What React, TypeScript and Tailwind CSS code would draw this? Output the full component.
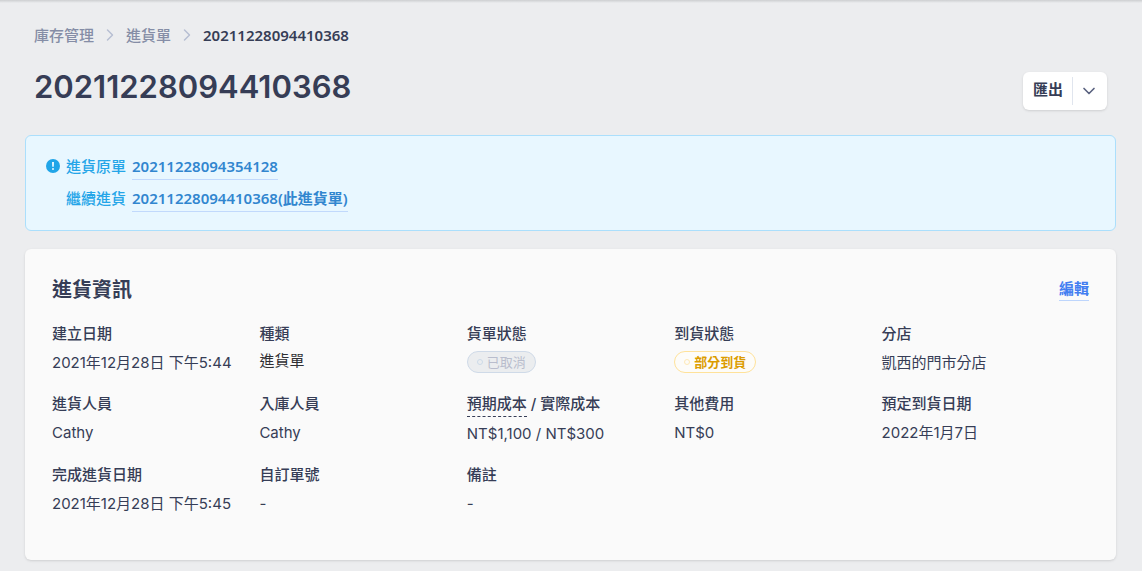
import React from 'react';
import { ChevronDown, ChevronRight } from 'lucide-react';

const fields = [
  { label: '建立日期', value: '2021年12月28日 下午5:44' },
  { label: '種類', value: <span className="block leading-5 text-[#2f2f33]">進貨單</span> },
  { label: '貨單狀態', value: <StatusTag tone="muted">已取消</StatusTag> },
  { label: '到貨狀態', value: <StatusTag tone="warning">部分到貨</StatusTag> },
  { label: '分店', value: '凱西的門市分店' },
  { label: '進貨人員', value: 'Cathy' },
  { label: '入庫人員', value: 'Cathy' },
  {
    label: (
      <>
        <span className="inline-block border-b border-dashed border-[#363d56]">預期成本</span> / 實際成本
      </>
    ),
    value: 'NT$1,100 / NT$300',
  },
  { label: '其他費用', value: 'NT$0' },
  { label: '預定到貨日期', value: '2022年1月7日' },
  { label: '完成進貨日期', value: '2021年12月28日 下午5:45' },
  { label: '自訂單號', value: '-' },
  { label: '備註', value: '-' },
];

function StatusTag({ tone, children }: { tone: 'muted' | 'warning'; children: React.ReactNode }) {
  return (
    <span
      className={`flex h-[22px] w-fit items-center gap-1 rounded-full border px-[9px] text-[13px] leading-5 ${
        tone === 'muted'
          ? 'border-[#cfdae8] bg-[#ebedef] text-[#b9bdcd]'
          : 'border-[#ffe29a] bg-[#fdfcf9] font-semibold text-[#dc9c00]'
      }`}
    >
      <span
        className={`h-[6px] w-[6px] rounded-full border ${
          tone === 'muted' ? 'border-[#cddbe9]' : 'border-[#ffe9b5]'
        }`}
      />
      {children}
    </span>
  );
}

function Breadcrumb() {
  return (
    <nav className="flex items-center gap-[6px] text-[15px] leading-6 font-medium text-[#858da6]">
      <a href="#inventory">庫存管理</a>
      <ChevronRight className="h-5 w-5 text-[#b7bfd2]" strokeWidth={1.75} />
      <a href="#orders">進貨單</a>
      <ChevronRight className="h-5 w-5 text-[#b7bfd2]" strokeWidth={1.75} />
      <span className="font-semibold text-[#363d56]">20211228094410368</span>
    </nav>
  );
}

function Notice() {
  return (
    <section className="mt-7 rounded-md border border-[#abdffc] bg-[#e8f7ff] px-5 pt-[18px] pb-[18px] text-[15px] text-[#24a5e8]">
      <div className="flex gap-[6px]">
        <svg viewBox="0 0 14 14" className="mt-[5px] h-[14px] w-[14px]">
          <circle cx="7" cy="7" r="7" fill="#20a5e8" />
          <path d="M6 3h2l-.2 4.8H6.2z" fill="#e8f7ff" />
          <circle cx="7" cy="9.9" r="1" fill="#e8f7ff" />
        </svg>
        <div className="space-y-[6px]">
          <p className="flex gap-[6px] leading-6 font-medium">
            進貨原單
            <a href="#origin" className="border-b border-[#c1d9fc] pb-px font-semibold text-[#3186cf]">
              20211228094354128
            </a>
          </p>
          <p className="flex gap-[6px] leading-6 font-medium">
            繼續進貨
            <a href="#current" className="border-b border-[#c1d9fc] pb-px font-semibold text-[#3186cf]">
              20211228094410368(此進貨單)
            </a>
          </p>
        </div>
      </div>
    </section>
  );
}

export default function App() {
  return (
    <div className="min-h-screen bg-[#ecedef] font-['Noto_Sans','Noto_Sans_CJK_TC',sans-serif] text-[#363d56]">
      <div className="h-[3px] bg-linear-to-b from-[#cdcfd1] to-[#ecedef]" />
      <main className="pt-5 pr-[26px] pb-3 pl-[25px]">
        <header className="flex items-end justify-between px-[9px]">
          <div>
            <Breadcrumb />
            <h1 className="mt-5 font-['Inter','Noto_Sans_CJK_TC',sans-serif] text-[31px] leading-10 font-semibold">
              20211228094410368
            </h1>
          </div>
          <div className="mb-[-3px] flex h-[38px] items-center rounded-md bg-white shadow-sm">
            <button className="h-full pr-[9px] pb-1 pl-[10px] text-[15px] font-semibold">匯出</button>
            <span className="h-7 w-px bg-[#e0e5ee]" />
            <button aria-label="更多匯出選項" className="flex h-full items-center pr-2 pl-[6px]">
              <ChevronDown className="h-5 w-5 text-[#59617f]" strokeWidth={2} />
            </button>
          </div>
        </header>

        <Notice />

        <section className="mt-[18px] rounded-md bg-[#fafafa] px-[27px] pt-[27px] pb-11 shadow-sm">
          <div className="flex items-start justify-between">
            <h2 className="text-xl leading-7 font-semibold">進貨資訊</h2>
            <a
              href="#edit"
              className="border-b border-[#bdd5fc] text-[15px] leading-6 font-semibold text-[#427ef1]"
            >
              編輯
            </a>
          </div>
          <dl className="mt-[18px] grid grid-cols-5 gap-y-[17px] font-['Inter','Noto_Sans_CJK_TC',sans-serif] text-[15px] leading-6">
            {fields.map((field, index) => (
              <div key={index}>
                <dt className="font-medium">{field.label}</dt>
                <dd className="mt-[5px]">{field.value}</dd>
              </div>
            ))}
          </dl>
        </section>
      </main>
    </div>
  );
}
